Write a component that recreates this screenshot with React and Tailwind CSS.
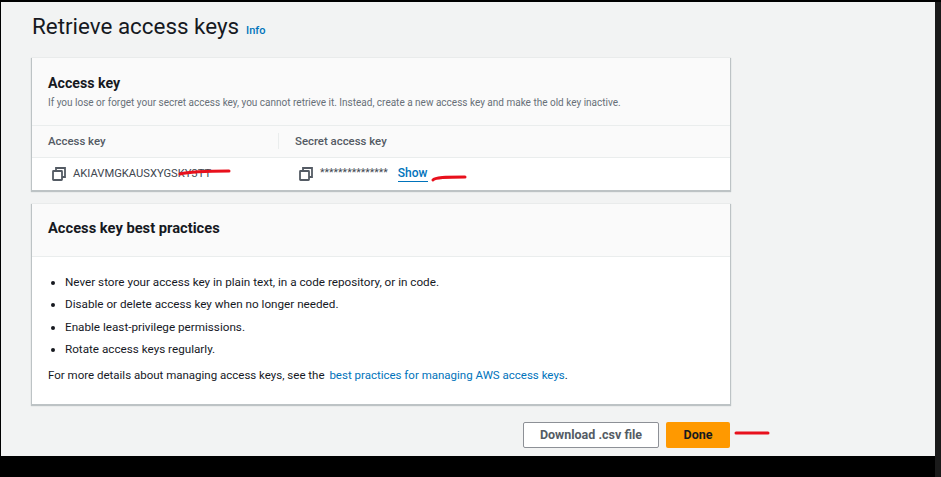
const CopyIcon = () => (
  <svg width="14" height="14" viewBox="0 0 14 14" fill="none" stroke="#545b64" strokeWidth="1.8" className="shrink-0">
    <rect x="1" y="4" width="9" height="9" rx="0.5" />
    <path d="M4 4V1h9v9h-3" />
  </svg>
)

const RedMark = ({ className, width, height, d }) => (
  <svg
    width={width}
    height={height}
    viewBox={`0 0 ${width} ${height}`}
    fill="none"
    stroke="#e8101c"
    strokeWidth="3"
    strokeLinecap="round"
    className={`absolute ${className}`}
  >
    <path d={d} />
  </svg>
)

const practices = [
  "Never store your access key in plain text, in a code repository, or in code.",
  "Disable or delete access key when no longer needed.",
  "Enable least-privilege permissions.",
  "Rotate access keys regularly.",
]

const Card = ({ children, className }) => (
  <div className={`ml-[31px] w-[698px] bg-white shadow-[0_1px_1px_1px_rgba(0,28,36,0.22)] ${className}`}>
    {children}
  </div>
)

export default function App() {
  return (
    <div className="relative flex h-[477px] w-[941px] overflow-hidden bg-black font-['Roboto',sans-serif] text-[#16191f]">
      <div className="mt-[2px] ml-[1px] flex h-[454px] w-[934px] flex-col bg-[#f2f3f3]">
        <div className="flex h-[56px] items-start pl-[31px]">
          <h1 className="mt-[8px] text-[22.4px] leading-[33px] font-normal">Retrieve access keys</h1>
          <a className="mt-[21px] ml-[7px] text-[11px] leading-[16px] font-medium text-[#0073bb]">Info</a>
        </div>

        <Card className="h-[132px]">
          <div className="h-[68px] border-b border-[#eaeded] bg-[#fafafa] pt-[15px] pl-[16px]">
            <h2 className="text-[14.2px] leading-[20px] font-bold">Access key</h2>
            <p className="mt-[2px] text-[10px] leading-[16px] text-[#687078]">
              If you lose or forget your secret access key, you cannot retrieve it. Instead, create a new access key and make the old key inactive.
            </p>
          </div>
          <div className="flex h-[32px] items-center border-b border-[#eaeded] bg-[#fafafa] pb-[2px] text-[11.4px] leading-[16px] font-medium text-[#545b64]">
            <div className="w-[246px] pl-[16px]">Access key</div>
            <div className="h-[16px] border-l border-[#eaeded] pl-[16px]">Secret access key</div>
          </div>
          <div className="flex h-[32px] items-center text-[11.2px] text-[#16191f]">
            <div className="flex w-[247px] items-center pl-[20px]">
              <CopyIcon />
              <span className="ml-[7px] text-[#414750]">AKIAVMGKAUSXYGSKY3TT</span>
            </div>
            <div className="flex items-center pl-[20px]">
              <CopyIcon />
              <span className="ml-[7px] mb-[3px] text-[10.5px] text-[#414750]">***************</span>
              <a className="ml-[10px] mb-[1px] border-b border-[#0073bb] text-[12px] leading-[15px] font-medium text-[#0073bb]">Show</a>
            </div>
          </div>
        </Card>

        <Card className="mt-[14px] h-[200px]">
          <div className="h-[53px] border-b border-[#eaeded] bg-[#fafafa] pt-[14px] pl-[16px]">
            <h2 className="text-[14.7px] leading-[20px] font-bold">Access key best practices</h2>
          </div>
          <ul className="mt-[14px] list-disc pl-[33px] text-[11.7px] leading-[22.4px] text-[#16191f]">
            {practices.map((item) => (
              <li key={item}>{item}</li>
            ))}
          </ul>
          <p className="mt-[3px] pl-[16px] text-[11.5px] leading-[22px]">
            For more details about managing access keys, see the{" "}
            <a className="ml-[2px] text-[#0073bb]">best practices for managing AWS access keys</a>.
          </p>
        </Card>

        <div className="mt-[18px] ml-[522px] flex w-[207px] gap-[7px]">
          <button className="h-[26px] w-[136px] rounded-[2px] border border-[#8d9096] bg-white text-[12.5px] font-bold text-[#545b64]">
            Download .csv file
          </button>
          <button className="h-[26px] w-[64px] rounded-[2px] bg-[#ff9900] text-[12.5px] font-bold text-[#16191f]">
            Done
          </button>
        </div>
      </div>

      <div className="mt-[2px] ml-auto h-full w-[6px] bg-[#1a1a1a]" />

      <RedMark className="left-[178px] top-[168px]" width={54} height={8} d="M2 6 C14 3 34 3 51 3" />
      <RedMark className="left-[431px] top-[174px]" width={37} height={8} d="M2 6 C4 3 14 3 34 3" />
      <RedMark className="left-[734px] top-[430px]" width={37} height={6} d="M2 3 H34" />
    </div>
  )
}
